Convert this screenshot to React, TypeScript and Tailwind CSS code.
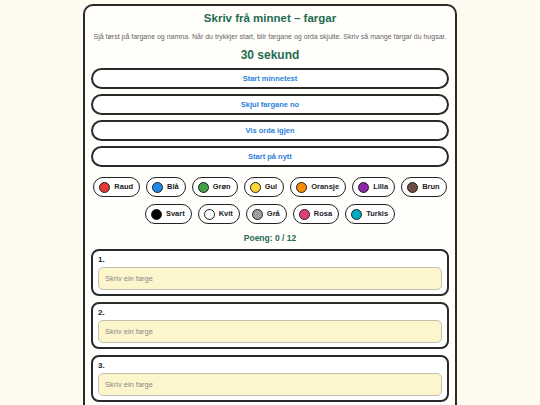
const buttons = ["Start minnetest", "Skjul fargane no", "Vis orda igjen", "Start på nytt"];

const colours = [
  { name: "Raud", hex: "#e53935" },
  { name: "Blå", hex: "#1e88e5" },
  { name: "Grøn", hex: "#43a047" },
  { name: "Gul", hex: "#fdd835" },
  { name: "Oransje", hex: "#fb8c00" },
  { name: "Lilla", hex: "#8e24aa" },
  { name: "Brun", hex: "#6d4c41" },
  { name: "Svart", hex: "#000000" },
  { name: "Kvit", hex: "#ffffff" },
  { name: "Grå", hex: "#9e9e9e" },
  { name: "Rosa", hex: "#e0407a" },
  { name: "Turkis", hex: "#00acc1" },
];

function ColourChip({ name, hex }: { name: string; hex: string }) {
  return (
    <div className="flex h-[20px] items-center gap-[4px] rounded-full border-[1.5px] border-[#222] bg-white pl-[5px] pr-[6px]">
      <span
        className="block h-[11px] w-[11px] rounded-full border border-[#222]"
        style={{ backgroundColor: hex }}
      />
      <span className="text-[7.5px] font-bold text-[#222]">{name}</span>
    </div>
  );
}

function AnswerBox({ n }: { n: number }) {
  return (
    <div className="flex h-[47px] flex-col rounded-[8px] border-2 border-[#2a2a2a] bg-white px-[5px] pt-[3px]">
      <div className="h-[11px] text-[8px] font-bold leading-[11px] text-[#222]">{n}.</div>
      <input
        type="text"
        placeholder="Skriv ein farge"
        className="mt-[2px] h-[23px] w-full rounded-[5px] border-[1.5px] border-[#c4c0b0] bg-[#fdf5cc] px-[6px] text-[7.5px] text-[#333] outline-none placeholder:text-[#8a8a8a]"
      />
    </div>
  );
}

export default function App() {
  return (
    <div className="min-h-screen bg-[#fdfaf0] pt-[4px] font-['Liberation_Sans',Arial,sans-serif]">
      <div className="mx-auto w-[374px] rounded-[10px] border-2 border-[#2a2a2a] bg-[#fffefa] px-[6px] pb-[10px] pt-[4px]">
        <h1 className="text-center text-[11.5px] font-bold leading-[16px] text-[#1f6b52]">
          Skriv frå minnet – fargar
        </h1>
        <p className="mt-[6px] text-center text-[7px] leading-[9px] text-[#666]">
          Sjå først på fargane og namna. Når du trykkjer start, blir fargane og orda skjulte. Skriv så mange fargar du hugsar.
        </p>
        <div className="mt-[6px] text-center text-[12px] font-bold leading-[16px] text-[#1f6b52]">30 sekund</div>

        <div className="mt-[5px] flex flex-col gap-[5px]">
          {buttons.map((b) => (
            <button
              key={b}
              className="h-[21px] w-full rounded-full border-2 border-[#2a2a2a] bg-white text-[7.5px] font-bold text-[#2b82d9]"
            >
              {b}
            </button>
          ))}
        </div>

        <div className="mt-[10px] flex flex-wrap justify-center gap-x-[6px] gap-y-[7px]">
          {colours.map((c) => (
            <ColourChip key={c.name} name={c.name} hex={c.hex} />
          ))}
        </div>

        <div className="mt-[8px] text-center text-[8.5px] font-bold leading-[12px] text-[#1f6b52]">Poeng: 0 / 12</div>

        <div className="mt-[5px] flex flex-col gap-[6px]">
          {[1, 2, 3, 4].map((n) => (
            <AnswerBox key={n} n={n} />
          ))}
        </div>
      </div>
    </div>
  );
}
